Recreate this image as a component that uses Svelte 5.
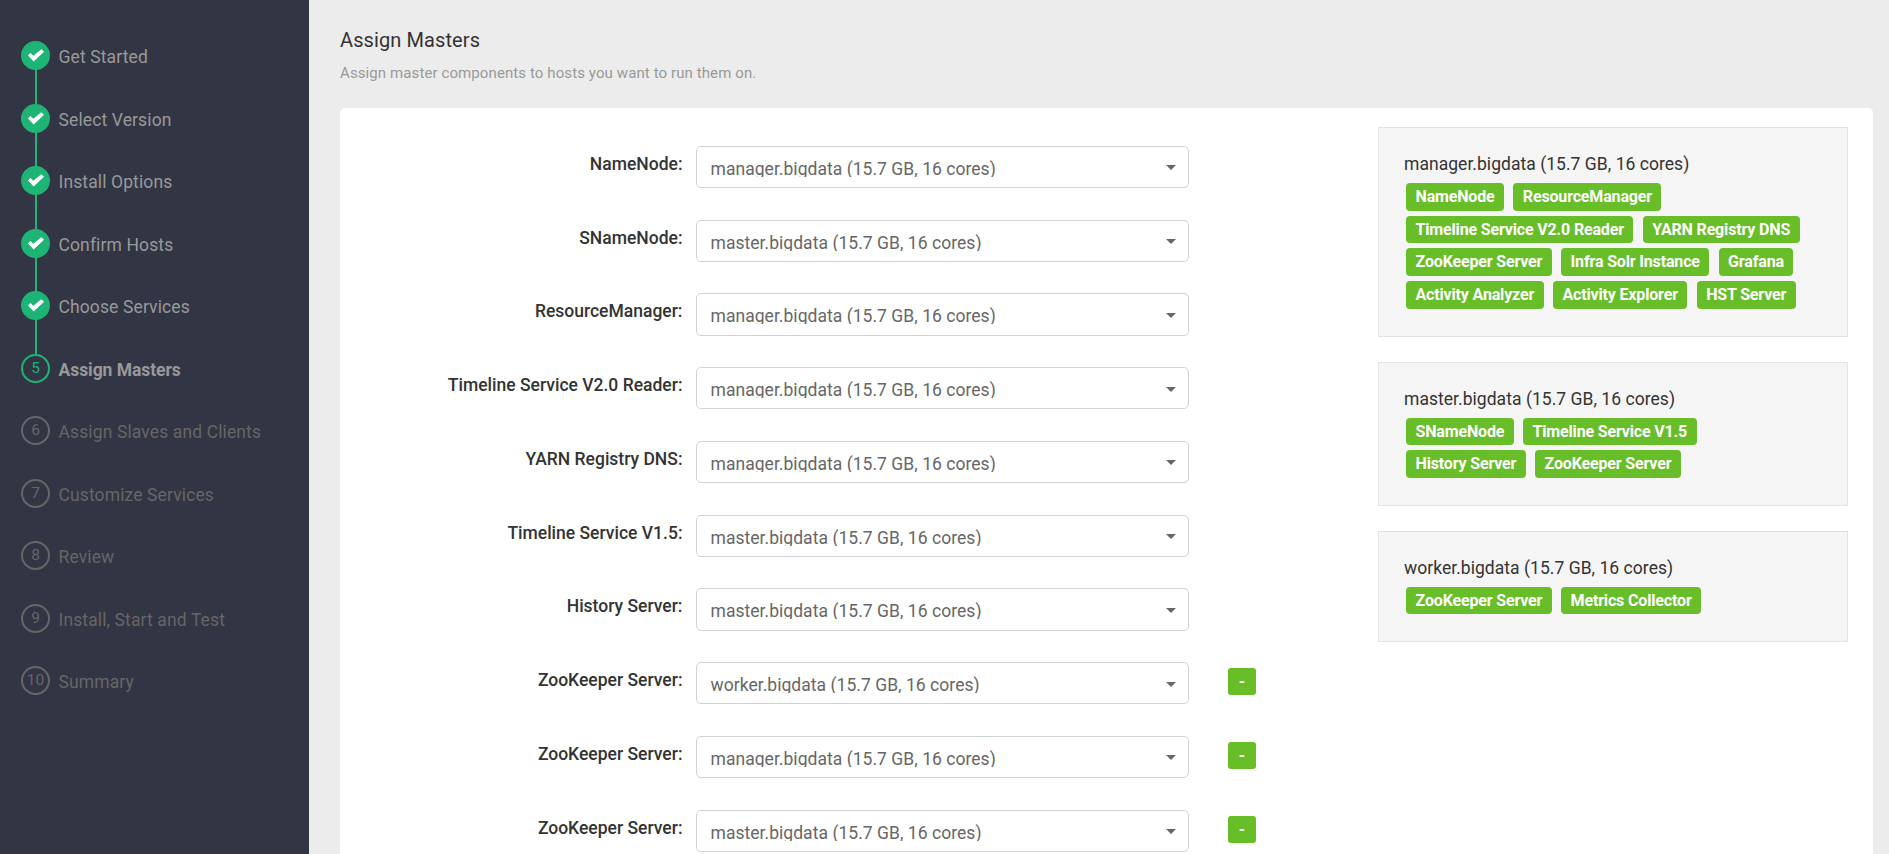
<script lang="ts">
    const steps = [
        "Get Started",
        "Select Version",
        "Install Options",
        "Confirm Hosts",
        "Choose Services",
        "Assign Masters",
        "Assign Slaves and Clients",
        "Customize Services",
        "Review",
        "Install, Start and Test",
        "Summary",
    ];
    const currentStep = 5;

    const hosts = [
        {
            name: "manager.bigdata",
            components: [
                "NameNode",
                "ResourceManager",
                "Timeline Service V2.0 Reader",
                "YARN Registry DNS",
                "ZooKeeper Server",
                "Infra Solr Instance",
                "Grafana",
                "Activity Analyzer",
                "Activity Explorer",
                "HST Server",
            ],
        },
        {
            name: "master.bigdata",
            components: [
                "SNameNode",
                "Timeline Service V1.5",
                "History Server",
                "ZooKeeper Server",
            ],
        },
        {
            name: "worker.bigdata",
            components: ["ZooKeeper Server", "Metrics Collector"],
        },
    ];

    let masters = $state([
        { label: "NameNode", host: "manager.bigdata", removable: false },
        { label: "SNameNode", host: "master.bigdata", removable: false },
        { label: "ResourceManager", host: "manager.bigdata", removable: false },
        { label: "Timeline Service V2.0 Reader", host: "manager.bigdata", removable: false },
        { label: "YARN Registry DNS", host: "manager.bigdata", removable: false },
        { label: "Timeline Service V1.5", host: "master.bigdata", removable: false },
        { label: "History Server", host: "master.bigdata", removable: false },
        { label: "ZooKeeper Server", host: "worker.bigdata", removable: true },
        { label: "ZooKeeper Server", host: "manager.bigdata", removable: true },
        { label: "ZooKeeper Server", host: "master.bigdata", removable: true },
    ]);

    function hostInfo(name: string) {
        return `${name} (15.7 GB, 16 cores)`;
    }

    function removeMaster(index: number) {
        masters.splice(index, 1);
    }
</script>

<div class="wizard">
    <nav class="sidebar">
        <ol class="steps">
            {#each steps as step, i}
                <li
                    class="step"
                    class:completed={i < currentStep}
                    class:active={i === currentStep}
                >
                    <span class="step-marker">
                        {#if i < currentStep}
                            <svg class="check" viewBox="0 0 48 38">
                                <path d="M0 19 7 11.5 16 20 40 0 48 8 17 37Z" />
                            </svg>
                        {:else}
                            {i}
                        {/if}
                    </span>
                    <span class="step-label">{step}</span>
                </li>
            {/each}
        </ol>
    </nav>

    <main class="content">
        <h4 class="title">Assign Masters</h4>
        <p class="subtitle">Assign master components to hosts you want to run them on.</p>

        <div class="panel">
            <div class="assignments">
                {#each masters as master, i}
                    <div class="master-row">
                        <span class="master-label">{master.label}:</span>
                        <button class="host-select">
                            <span class="host-value">{hostInfo(master.host)}</span>
                            <svg class="caret" viewBox="0 0 10 5">
                                <path d="M0 0H10L5 5Z" />
                            </svg>
                        </button>
                        {#if master.removable}
                            <button class="remove" onclick={() => removeMaster(i)}>-</button>
                        {/if}
                    </div>
                {/each}
            </div>

            <aside class="hosts">
                {#each hosts as host}
                    <section class="host-card">
                        <div class="host-name">{hostInfo(host.name)}</div>
                        <div class="badges">
                            {#each host.components as component}
                                <span class="badge">{component}</span>
                            {/each}
                        </div>
                    </section>
                {/each}
            </aside>
        </div>
    </main>
</div>

<style>
    :global(body) {
        margin: 0;
        overflow: hidden;
    }

    .wizard {
        display: flex;
        height: 100vh;
        overflow: hidden;
        background: #ececec;
        color: #333;
        font-family: Roboto, "Liberation Sans", sans-serif;
        font-size: 17.5px;
        line-height: 25px;
    }

    /* Sidebar */
    .sidebar {
        flex: none;
        width: 309px;
        background: #323544;
    }

    .steps {
        list-style: none;
        margin: 0;
        padding: 41px 0 0 21px;
    }

    .step {
        position: relative;
        display: flex;
        gap: 8.5px;
        height: 62.5px;
        color: #666;
    }

    .step.completed,
    .step.active {
        color: #999;
    }

    .step.active {
        font-weight: 700;
    }

    /* line down to the next marker */
    .step.completed::after {
        content: "";
        position: absolute;
        left: 14px;
        top: 28px;
        width: 2px;
        height: 35px;
        background: #1eb475;
    }

    .step-marker {
        display: flex;
        align-items: center;
        justify-content: center;
        box-sizing: border-box;
        width: 29px;
        height: 29px;
        border: 2px solid #666;
        border-radius: 50%;
        font-size: 15.5px;
        font-weight: 400;
    }

    .completed .step-marker {
        background: #1eb475;
        border-color: #1eb475;
    }

    .active .step-marker {
        border-color: #1eb475;
        color: #1eb475;
    }

    .check {
        width: 16px;
        height: 13px;
        fill: #fff;
    }

    .step-label {
        padding-top: 4px;
        letter-spacing: 0.12px;
    }

    .active .step-label {
        letter-spacing: -0.05px;
    }

    /* Page */
    .content {
        flex: 1;
        padding: 27px 16px 0 31px;
    }

    .title {
        margin: 0;
        font-size: 20px;
        font-weight: 400;
        line-height: 26px;
        letter-spacing: 0.1px;
    }

    .subtitle {
        margin: 9px 0 0;
        color: #999;
        font-size: 15px;
        line-height: 22px;
        letter-spacing: 0.1px;
    }

    .panel {
        display: flex;
        justify-content: space-between;
        box-sizing: border-box;
        min-height: 900px;
        margin-top: 24px;
        padding: 19px 25px 0 0;
        background: #fff;
        border-radius: 5px;
    }

    .assignments {
        padding-top: 18.85px;
    }

    .master-row {
        display: flex;
        height: 73.75px;
    }

    .master-label {
        width: 342.5px;
        padding-top: 6px;
        margin-right: 13.5px;
        text-align: right;
        font-weight: 500;
    }

    .host-select {
        display: flex;
        align-items: center;
        justify-content: space-between;
        box-sizing: border-box;
        width: 493px;
        height: 42.25px;
        padding: 2px 12px 0 13.5px;
        background: #fff;
        border: 1px solid #cfd3d7;
        border-radius: 5px;
        color: #666;
        font: inherit;
        letter-spacing: 0.04px;
        cursor: pointer;
    }

    /* fixed height crops the descenders */
    .host-value {
        height: 18px;
        line-height: 20px;
        overflow: hidden;
    }

    .caret {
        width: 10px;
        height: 5px;
        fill: #666;
    }

    .remove {
        width: 28px;
        height: 27px;
        margin: 6px 0 0 39px;
        padding: 0;
        background: #68be28;
        border: none;
        border-radius: 3px;
        color: #fff;
        font: 700 16px/27px Roboto, sans-serif;
        cursor: pointer;
    }

    /* Host summary */
    .hosts {
        width: 470px;
    }

    .host-card {
        box-sizing: border-box;
        margin-bottom: 25px;
        padding: 24px 25px 27px;
        background: #f5f5f5;
        border: 1px solid #e3e3e3;
    }

    .host-name {
        letter-spacing: 0.04px;
    }

    .badges {
        display: flex;
        flex-wrap: wrap;
        gap: 5.2px 9.3px;
        padding: 6px 0 0 2px;
    }

    .badge {
        height: 27.5px;
        padding: 0 9.5px;
        background: #68be28;
        border-radius: 4px;
        color: #fff;
        font-size: 16px;
        font-weight: 700;
        line-height: 27px;
        letter-spacing: -0.16px;
    }
</style>
